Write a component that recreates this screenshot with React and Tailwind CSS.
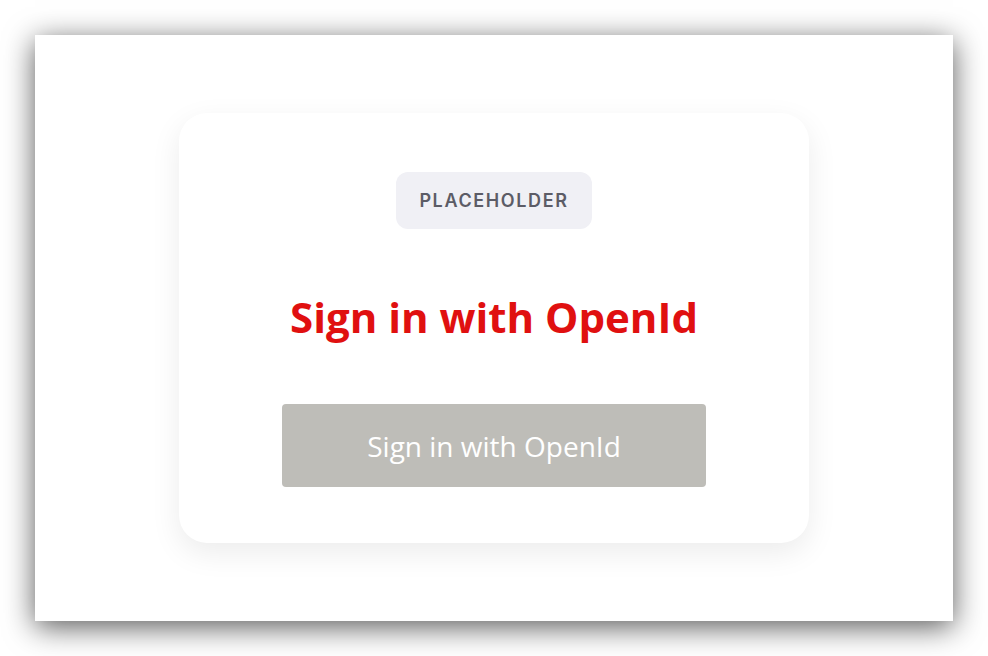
export default function App() {
  return (
    <div className="flex h-[656px] w-[988px] items-start bg-white p-[35px] font-['Open_Sans',sans-serif]">
      {/* window frame */}
      <div className="flex h-[586px] w-[918px] items-center justify-center bg-white shadow-[0_6px_28px_rgba(0,0,0,0.65)]">
        {/* card */}
        <div className="flex h-[430px] w-[630px] flex-col items-center rounded-[28px] bg-white pt-[59px] shadow-[0_10px_30px_rgba(0,0,0,0.08)]">
          <div className="flex h-[57px] w-[196px] items-center justify-center rounded-xl bg-[#f0f0f5] font-['Inter',sans-serif] text-[18px] font-semibold tracking-[0.09em] text-[#5c5c66]">
            PLACEHOLDER
          </div>
          <h1 className="mt-[63px] text-[42px] leading-[50px] font-bold text-[#e01010]">
            Sign in with OpenId
          </h1>
          <button className="mt-[62px] flex h-[83px] w-[424px] items-center justify-center rounded-[4px] bg-[#bebdb8] text-[28px] text-white">
            Sign in with OpenId
          </button>
        </div>
      </div>
    </div>
  );
}
